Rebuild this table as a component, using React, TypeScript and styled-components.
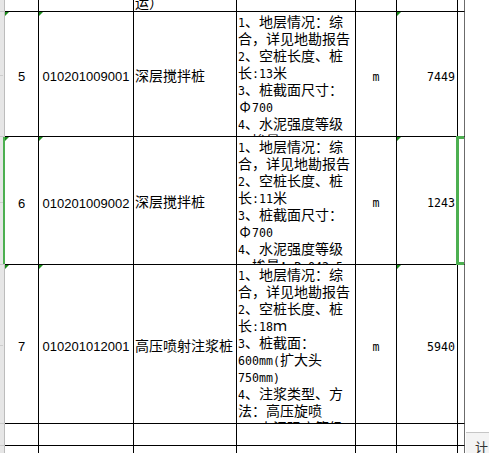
import React from "react";
import styled, { createGlobalStyle, css } from "styled-components";

const GlobalStyle = createGlobalStyle`
  html, body { margin: 0; padding: 0; background: #ffffff; overflow: hidden; }
  #root { width: 489px; height: 453px; }
`;

const Screen = styled.div`
  display: flex;
  width: 489px;
  height: 453px;
  overflow: hidden;
  background: #ffffff;
  color: #000000;
  font-family: "Noto Sans CJK SC", sans-serif;
`;

const Sheet = styled.div`
  flex: none;
  align-self: flex-start;
  display: grid;
  grid-template-columns: 5px 34px 95px 103px 119px 41px 61px 7px;
  grid-template-rows: 12px 125px 128px 159px 22px 22px;
`;

const Gutter = styled.div<{ $selected?: boolean; $mark?: boolean }>`
  position: relative;
  box-sizing: border-box;
  background: #e6e6e6;
  border-bottom: 1px solid #c9c9c9;
  box-shadow: ${(p) => (p.$selected ? "inset -2px 0 0 #4caf50" : "inset -1px 0 0 #bcbcbc")};
  ${(p) =>
    p.$mark &&
    css`
      &::after {
        content: "";
        position: absolute;
        left: 0;
        top: calc(50% + 1px);
        width: 3px;
        height: 1px;
        background: #cdcdcd;
      }
    `}
`;

const Cell = styled.div<{ $flag?: boolean }>`
  position: relative;
  box-sizing: border-box;
  min-width: 0;
  overflow: hidden;
  display: flex;
  flex-direction: column;
  justify-content: center;
  align-items: center;
  white-space: nowrap;
  border-right: 1px solid #000000;
  border-bottom: 1px solid #000000;
  ${(p) =>
    p.$flag &&
    css`
      &::before {
        content: "";
        position: absolute;
        top: 0;
        left: 0;
        width: 0;
        height: 0;
        border-top: 4px solid #1c8c1c;
        border-right: 4px solid transparent;
      }
    `}
`;

const IndexCell = styled(Cell)`
  padding-top: 5px;
  font: 13px "Liberation Sans", Arial, sans-serif;
`;

const CodeCell = styled(Cell)`
  padding-top: 5px;
  font: 13px "Liberation Sans", Arial, sans-serif;
`;

const NameCell = styled(Cell)`
  align-items: flex-start;
  padding: 2px 0 0 1px;
  font: 14px/17px "Noto Sans CJK SC", sans-serif;
`;

const CarryCell = styled(Cell)`
  align-items: flex-start;
  justify-content: flex-end;
  padding-left: 1px;
  font: 14px/17px "Noto Sans CJK SC", sans-serif;
`;

const DescCell = styled(Cell)`
  align-items: flex-start;
  justify-content: flex-start;
  padding: 1px 0 0 1px;
  font: 14px/17px "Noto Sans CJK SC", sans-serif;
`;

const UnitCell = styled(Cell)`
  padding-top: 5px;
  font: 11.6px "DejaVu Sans Mono", "Liberation Mono", monospace;
`;

const QtyCell = styled(Cell)`
  align-items: flex-end;
  padding: 5px 2px 0 0;
  font: 11.6px "DejaVu Sans Mono", "Liberation Mono", monospace;
`;

const EdgeCell = styled(Cell)`
  overflow: visible;
  border-right-color: #6b6b6b;
`;

const Line = styled.div`
  flex: none;
  height: 17px;
  line-height: 17px;
  white-space: nowrap;
`;

const Half = styled.span`
  font-family: "DejaVu Sans Mono", "Liberation Mono", monospace;
  font-size: 11.6px;
`;

const Full = styled.span`
  display: inline-block;
  width: 14px;
  text-align: center;
`;

const Selection = styled.div`
  position: absolute;
  left: -2px;
  top: -1px;
  right: 0;
  bottom: -1px;
  border: 3px solid #4caf50;
  border-right: 0;
  pointer-events: none;
`;

const SidePane = styled.div`
  flex: 1;
  display: flex;
  flex-direction: column;
  justify-content: flex-end;
  background: #ffffff;
`;

const SheetTab = styled.div`
  height: 21px;
  box-sizing: border-box;
  margin-left: 1px;
  padding: 4px 0 0 9px;
  border-top: 1px solid #c6c6c6;
  background: #f4f4f4;
  color: #333333;
  font: 13px/20px "Noto Sans CJK SC", sans-serif;
  overflow: hidden;
`;

type Item = {
  no: string;
  code: string;
  name: string;
  desc: string[];
  unit: string;
  qty: string;
  selected?: boolean;
};

const items: Item[] = [
  {
    no: "5",
    code: "010201009001",
    name: "深层搅拌桩",
    desc: [
      "1、地层情况：综",
      "合，详见地勘报告",
      "2、空桩长度、桩",
      "长:13米",
      "3、桩截面尺寸：",
      "Φ700",
      "4、水泥强度等级",
      "、掺量：P.O42.5",
    ],
    unit: "m",
    qty: "7449",
  },
  {
    no: "6",
    code: "010201009002",
    name: "深层搅拌桩",
    desc: [
      "1、地层情况：综",
      "合，详见地勘报告",
      "2、空桩长度、桩",
      "长:11米",
      "3、桩截面尺寸：",
      "Φ700",
      "4、水泥强度等级",
      "、掺量：P.O42.5",
    ],
    unit: "m",
    qty: "1243",
    selected: true,
  },
  {
    no: "7",
    code: "010201012001",
    name: "高压喷射注浆桩",
    desc: [
      "1、地层情况：综",
      "合，详见地勘报告",
      "2、空桩长度、桩",
      "长:18ｍ",
      "3、桩截面：",
      "600mm(扩大头",
      "750mm)",
      "4、注浆类型、方",
      "法：高压旋喷",
      "5、水泥强度等级",
    ],
    unit: "m",
    qty: "5940",
  },
];

const renderText = (text: string) =>
  text
    .split(/([\x21-\x7e]+|Φ)/)
    .filter((part) => part.length > 0)
    .map((part, i) => {
      if (part === "Φ") return <Full key={i}>Φ</Full>;
      if (/^[\x21-\x7e]+$/.test(part)) return <Half key={i}>{part}</Half>;
      return <React.Fragment key={i}>{part}</React.Fragment>;
    });

const EmptyRow: React.FC = () => (
  <>
    <Gutter />
    <Cell />
    <Cell />
    <Cell />
    <Cell />
    <Cell />
    <Cell />
    <EdgeCell />
  </>
);

export default function App() {
  return (
    <>
      <GlobalStyle />
      <Screen>
        <Sheet>
          <Gutter />
          <Cell />
          <Cell />
          <CarryCell>
            <Line>运）</Line>
          </CarryCell>
          <Cell />
          <Cell />
          <Cell />
          <EdgeCell />

          {items.map((item) => (
            <React.Fragment key={item.no}>
              <Gutter $selected={item.selected} $mark />
              <IndexCell $flag>{item.no}</IndexCell>
              <CodeCell $flag>{item.code}</CodeCell>
              <NameCell>
                <Line>{item.name}</Line>
              </NameCell>
              <DescCell>
                {item.desc.map((line, i) => (
                  <Line key={i}>{renderText(line)}</Line>
                ))}
              </DescCell>
              <UnitCell>{item.unit}</UnitCell>
              <QtyCell $flag>{item.qty}</QtyCell>
              <EdgeCell>{item.selected && <Selection />}</EdgeCell>
            </React.Fragment>
          ))}

          <EmptyRow />
          <EmptyRow />
        </Sheet>
        <SidePane>
          <SheetTab>计</SheetTab>
        </SidePane>
      </Screen>
    </>
  );
}
